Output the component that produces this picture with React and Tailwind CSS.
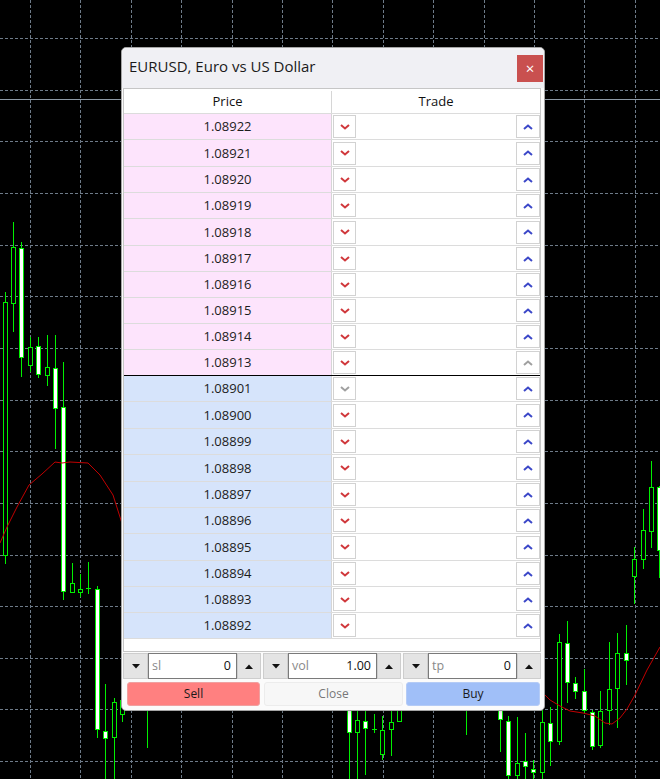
const G = "#00f000";

const candles = [
  [5, 302, 556, 292, 564, "b"],
  [13, 247, 304, 222, 332, "b"],
  [21, 248, 358, 242, 377, "w"],
  [30, 347, 366, 337, 372, "b"],
  [38, 346, 375, 337, 378, "w"],
  [47, 367, 376, 335, 386, "b"],
  [55, 368, 409, 335, 449, "w"],
  [63, 407, 592, 362, 600, "w"],
  [72, 583, 593, 563, 593, "b"],
  [80, 589, 593, 574, 597, "b"],
  [88, 588, 588, 562, 594, "x"],
  [97, 589, 730, 586, 738, "w"],
  [105, 731, 739, 684, 779, "w"],
  [114, 702, 738, 698, 779, "b"],
  [122, 700, 715, 698, 722, "b"],
  [147, 690, 700, 680, 748, "b"],
  [349, 690, 733, 680, 779, "w"],
  [357, 720, 733, 700, 779, "b"],
  [365, 721, 729, 705, 775, "w"],
  [374, 729, 729, 714, 733, "x"],
  [382, 730, 755, 716, 760, "b"],
  [391, 722, 730, 705, 756, "b"],
  [399, 700, 722, 690, 722, "b"],
  [466, 690, 700, 690, 735, "b"],
  [500, 700, 720, 690, 752, "w"],
  [508, 721, 776, 716, 779, "w"],
  [517, 763, 776, 717, 779, "b"],
  [525, 761, 767, 733, 779, "w"],
  [533, 769, 773, 760, 779, "w"],
  [542, 722, 773, 707, 779, "b"],
  [550, 723, 742, 707, 766, "w"],
  [559, 642, 742, 634, 745, "b"],
  [567, 643, 683, 621, 703, "w"],
  [575, 683, 692, 677, 699, "w"],
  [584, 691, 711, 669, 713, "w"],
  [592, 712, 747, 710, 750, "w"],
  [600, 711, 746, 691, 748, "b"],
  [609, 689, 711, 642, 725, "b"],
  [617, 653, 689, 633, 728, "b"],
  [626, 653, 661, 625, 685, "w"],
  [634, 559, 577, 547, 604, "b"],
  [643, 530, 560, 509, 569, "b"],
  [651, 487, 532, 461, 548, "b"],
  [659, 487, 551, 486, 578, "w"],
];

const maLeft = "0,543 7,527 17,507 29,485 42,474 55,462 62,463 70,462 88,463 100,475 113,495 120,517 124,530";
const maRight = "545,695 550,700 560,706 570,711 583,713 595,716 605,723 612,724 620,718 627,709 635,695 647,670 660,647";

function Chart() {
  const hs = [];
  for (let k = 0; k < 15; k++) hs.push(Math.round(38 + 51.65 * k) + 0.5);
  const vs = [];
  for (let k = 0; k < 13; k++) vs.push(Math.round(30 + 50.4 * k) + 0.5);
  return (
    <svg className="absolute inset-0" width="660" height="779" shapeRendering="crispEdges">
      {hs.map((y) => (
        <line key={"h" + y} x1="0" x2="660" y1={y} y2={y} stroke="#6e7b89" strokeDasharray="3 2" />
      ))}
      {vs.map((x) => (
        <line key={"v" + x} x1={x} x2={x} y1="0" y2="779" stroke="#6e7b89" strokeDasharray="3 2" />
      ))}
      <line x1="0" x2="660" y1="99.5" y2="99.5" stroke="#8d99a6" />
      {candles.map(([x, bt, bb, wt, wb, f]) => (
        <g key={x}>
          <line x1={x + 0.5} x2={x + 0.5} y1={wt} y2={wb} stroke={G} />
          {f === "x" ? (
            <line x1={x - 2} x2={x + 3} y1={bt + 0.5} y2={bt + 0.5} stroke={G} />
          ) : (
            <rect x={x - 1.5} y={bt + 0.5} width="4" height={bb - bt - 1} fill={f === "w" ? "#fff" : "#000"} stroke={G} />
          )}
        </g>
      ))}
      <polyline points={maLeft} fill="none" stroke="#c00000" shapeRendering="auto" />
      <polyline points={maRight} fill="none" stroke="#c00000" shapeRendering="auto" />
    </svg>
  );
}

const Chev = ({ up, color }) => (
  <svg width="10" height="6" viewBox="0 0 10 6">
    <path d={up ? "M1 5L5 1.5L9 5" : "M1 1L5 4.5L9 1"} fill="none" stroke={color} strokeWidth="2" />
  </svg>
);

const Tri = ({ up }) => (
  <svg width="8" height="5" viewBox="0 0 8 5">
    <polygon points={up ? "0,5 8,5 4,0.5" : "0,0 8,0 4,4.5"} fill="#111" />
  </svg>
);

const RED = "#d0383c";
const BLUE = "#3c48c8";
const GREY = "#a0a0a0";

function Row({ price, bg, tall, last, greyUp, greyDown }) {
  return (
    <div className={`flex ${tall ? "h-[27px]" : "h-[26px]"} border-b ${last ? "border-black" : "border-[#dcdcdc]"}`}>
      <div className={`flex w-[208px] items-center justify-center border-r border-[#d6d6d6] pt-[1px] ${bg} text-[13px] text-[#1c1c1c]`}>
        {price}
      </div>
      <div className="flex flex-1 items-center justify-between pl-[1px]">
        <div className="flex h-[23px] w-[23px] items-center justify-center border border-[#d2d2d2] bg-white">
          <Chev color={greyDown ? GREY : RED} />
        </div>
        <div className="flex h-[23px] w-[24px] items-center justify-center border border-[#d2d2d2] bg-white">
          <Chev up color={greyUp ? GREY : BLUE} />
        </div>
      </div>
    </div>
  );
}

function Spin({ label, value }) {
  return (
    <div className="flex h-[26px]">
      <button className="flex w-[25px] items-center justify-center border border-[#cdcdcd] bg-[#e4e4e4]">
        <Tri />
      </button>
      <div className="flex flex-1 items-center justify-between border border-[#7a7a7a] bg-white pl-[3px] pr-[5px] text-[12.5px]">
        <span className="text-[#8a8a8a]">{label}</span>
        <span className="text-[#111]">{value}</span>
      </div>
      <button className="flex w-[24px] items-center justify-center border border-[#cdcdcd] bg-[#e4e4e4]">
        <Tri up />
      </button>
    </div>
  );
}

const sells = ["1.08922", "1.08921", "1.08920", "1.08919", "1.08918", "1.08917", "1.08916", "1.08915", "1.08914", "1.08913"];
const buys = ["1.08901", "1.08900", "1.08899", "1.08898", "1.08897", "1.08896", "1.08895", "1.08894", "1.08893", "1.08892"];

export default function App() {
  return (
    <div className="relative h-[779px] w-[660px] overflow-hidden bg-black" style={{ fontFamily: '"Open Sans", "Noto Sans", sans-serif' }}>
      <Chart />
      <div className="absolute left-[121px] top-[47px] flex h-[664px] w-[424px] flex-col rounded-[5px] border border-[#a4a4a4] bg-[#fbfbfb] shadow-md">
        <div className="flex h-[40px] items-start justify-between rounded-t-[5px] bg-[#f0f0f4]">
          <span className="pl-[7px] text-[15px] leading-[37px] text-[#1a1a1a]">EURUSD, Euro vs US Dollar</span>
          <button className="mr-[1px] mt-[7px] flex h-[27px] w-[26px] items-center justify-center bg-[#c9504f] text-[15px] leading-none text-white">
            ×
          </button>
        </div>
        <div className="ml-[1px] h-[564px] w-[418px] overflow-hidden border border-[#c6c6c6] bg-white">
          <div className="flex h-[25px] border-b border-[#dcdcdc] pt-[2px] text-[13px] text-[#111]">
            <div className="flex w-[208px] items-center justify-center border-r border-[#d6d6d6]">Price</div>
            <div className="flex flex-1 items-center justify-center">Trade</div>
          </div>
          {sells.map((p, i) => (
            <Row key={p} price={p} bg="bg-[#fde4fc]" tall={i === 1 || i === 4} last={i === 9} greyUp={i === 9} />
          ))}
          {buys.map((p, i) => (
            <Row key={p} price={p} bg="bg-[#d6e4fb]" tall={i === 1 || i === 3 || i === 6} greyDown={i === 0} />
          ))}
        </div>
        <div className="ml-[1px] mt-[1px] grid w-[418px] grid-cols-3 gap-[2px]">
          <Spin label="sl" value="0" />
          <Spin label="vol" value="1.00" />
          <Spin label="tp" value="0" />
        </div>
        <div className="mt-[3px] flex h-[24px] pl-[5px] text-[12px]">
          <button className="w-[133px] rounded-[3px] border border-[#f0a0a0] bg-[#ff8080] text-[#1a1a1a]">Sell</button>
          <button className="ml-[4px] w-[139px] rounded-[3px] border border-[#ececec] bg-[#f7f7f7] text-[#777]">Close</button>
          <button className="ml-[3px] w-[134px] rounded-[3px] border border-[#b4cbf6] bg-[#a0bff8] text-[#1a1a1a]">Buy</button>
        </div>
      </div>
    </div>
  );
}
